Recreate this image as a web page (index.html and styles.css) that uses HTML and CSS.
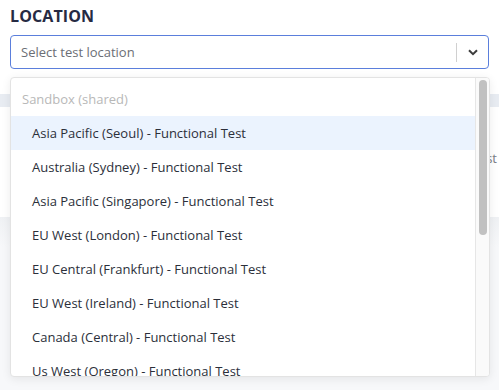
FILE: index.html
```html
<!DOCTYPE html>
<html lang="en">
<head>
    <meta charset="UTF-8">
    <meta name="viewport" content="width=device-width, initial-scale=1.0">
    <title>Location</title>
    <link rel="stylesheet" href="styles.css">
</head>
<body>
    <div class="field">
        <h3 class="field-label">LOCATION</h3>
        <div class="select">
            <div class="select-control">
                <span class="select-placeholder">Select test location</span>
                <span class="select-sep"></span>
                <span class="select-arrow">
                    <svg width="10" height="7" viewBox="0 0 10 7"><path d="M1 1.2 L5 5.2 L9 1.2" fill="none" stroke="#3d3d3d" stroke-width="2"/></svg>
                </span>
            </div>

            <div class="select-menu">
                <div class="menu-list">
                    <div class="menu-group">Sandbox (shared)</div>
                    <div class="menu-option active">Asia Pacific (Seoul) - Functional Test</div>
                    <div class="menu-option">Australia (Sydney) - Functional Test</div>
                    <div class="menu-option">Asia Pacific (Singapore) - Functional Test</div>
                    <div class="menu-option">EU West (London) - Functional Test</div>
                    <div class="menu-option">EU Central (Frankfurt) - Functional Test</div>
                    <div class="menu-option">EU West (Ireland) - Functional Test</div>
                    <div class="menu-option">Canada (Central) - Functional Test</div>
                    <div class="menu-option">Us West (Oregon) - Functional Test</div>
                </div>
                <div class="menu-scroll">
                    <div class="menu-thumb"></div>
                </div>
            </div>
        </div>
    </div>

    <div class="backdrop">
        <div class="backdrop-head"></div>
        <div class="backdrop-row">Functional Test</div>
        <div class="backdrop-body"></div>
    </div>
</body>
</html>
```

FILE: styles.css
```css
body {
    margin: 0;
    font-family: "Open Sans", "Noto Sans", sans-serif;
    background-color: #ffffff;
    color: #2b2f3a;
    overflow: hidden;
}
.field {
    padding: 5px 10px 8px 10px;
}
.field-label {
    margin: 0 0 8px 0;
    font-size: 16px;
    font-weight: 700;
    color: #262a43;
    letter-spacing: 0.1px;
}
.select {
    position: relative;
}
.select-control {
    display: flex;
    align-items: center;
    height: 32px;
    border: 1px solid #5b7fdc;
    border-radius: 4px;
    background-color: white;
}
.select-placeholder {
    flex: 1;
    padding-left: 10px;
    font-size: 13px;
    color: #6b6e75;
}
.select-sep {
    width: 1px;
    height: 19px;
    background-color: #d0d0d0;
}
.select-arrow {
    display: flex;
    align-items: center;
    justify-content: center;
    width: 31px;
    height: 100%;
}
.select-menu {
    position: absolute;
    top: 42px;
    left: 0;
    right: -1px;
    height: 298px;
    display: flex;
    overflow: hidden;
    background-color: white;
    border: 1px solid #e3e3e3;
    border-radius: 4px;
    box-shadow: 0 2px 10px rgba(0,0,0,0.08);
    z-index: 2;
}
.menu-list {
    flex: 1;
    padding: 4px 0;
    overflow: hidden;
}
.menu-scroll {
    width: 14px;
    background-color: #fafafa;
    border-left: 1px solid #e6e6e6;
    padding: 2px 2px 0 3px;
    box-sizing: border-box;
}
.menu-thumb {
    height: 155px;
    background-color: #c1c1c1;
    border-radius: 5px;
}
.menu-group {
    height: 34px;
    line-height: 34px;
    padding-left: 11px;
    font-size: 13px;
    color: #b8b8b8;
}
.menu-option {
    height: 34px;
    line-height: 34px;
    padding-left: 21px;
    font-size: 13px;
    color: #2b2f3a;
    white-space: nowrap;
}
.menu-option.active {
    background-color: #ebf3fe;
}

.backdrop {
    margin-top: 17px;
}
.backdrop-head {
    height: 13px;
    background-color: #e8ecf2;
}
.backdrop-row {
    height: 110px;
    padding: 42px 2px 0 0;
    box-sizing: border-box;
    text-align: right;
    font-size: 13px;
    color: #7a7d84;
    overflow: hidden;
}
.backdrop-body {
    height: 180px;
    background: linear-gradient(#eff1f4, #f7f8fa 30px);
}
```
